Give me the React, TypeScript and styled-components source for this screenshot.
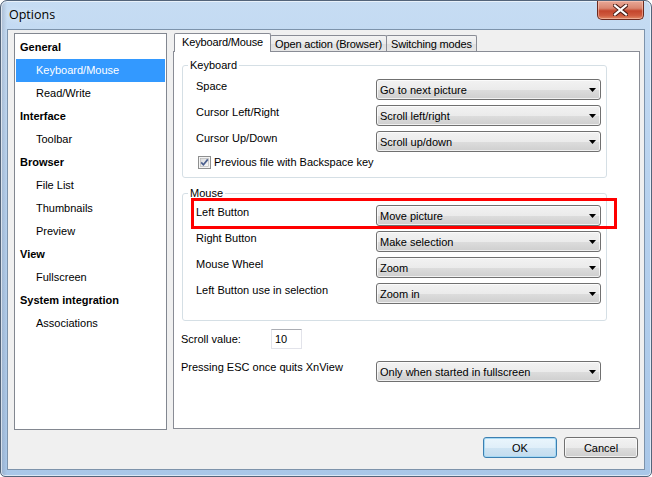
import React from 'react';
import styled, { createGlobalStyle } from 'styled-components';

const GlobalStyle = createGlobalStyle`
  html, body {
    margin: 0;
    padding: 0;
  }
  body {
    font-family: "Liberation Sans", Arial, sans-serif;
    font-size: 11px;
    color: #000;
    background: #fff;
  }
  * {
    box-sizing: border-box;
  }
`;

const treeItems = [
  { label: 'General', head: true },
  { label: 'Keyboard/Mouse', selected: true },
  { label: 'Read/Write' },
  { label: 'Interface', head: true },
  { label: 'Toolbar' },
  { label: 'Browser', head: true },
  { label: 'File List' },
  { label: 'Thumbnails' },
  { label: 'Preview' },
  { label: 'View', head: true },
  { label: 'Fullscreen' },
  { label: 'System integration', head: true },
  { label: 'Associations' },
];

const keyboardRows = [
  { label: 'Space', value: 'Go to next picture' },
  { label: 'Cursor Left/Right', value: 'Scroll left/right' },
  { label: 'Cursor Up/Down', value: 'Scroll up/down' },
];

const mouseRows = [
  { label: 'Left Button', value: 'Move picture', marked: true },
  { label: 'Right Button', value: 'Make selection' },
  { label: 'Mouse Wheel', value: 'Zoom' },
  { label: 'Left Button use in selection', value: 'Zoom in' },
];

const Arrow = () => (
  <svg width="7" height="4" viewBox="0 0 7 4">
    <polygon points="0,0 7,0 3.5,4" fill="#000" />
  </svg>
);

const CheckMark = () => (
  <svg width="13" height="13" viewBox="0 0 13 13">
    <defs>
      <linearGradient id="cbg" x1="0" y1="0" x2="1" y2="1">
        <stop offset="0" stopColor="#d9dadc" />
        <stop offset="1" stopColor="#fafafa" />
      </linearGradient>
    </defs>
    <rect x="0.5" y="0.5" width="12" height="12" fill="#f4f4f4" stroke="#8e8f8f" />
    <rect x="2.5" y="2.5" width="8" height="8" fill="url(#cbg)" stroke="#b1b1b1" strokeWidth="0.6" />
    <path d="M3.2 6.4 L5.4 8.8 L9.8 3.4" fill="none" stroke="#4b5f8e" strokeWidth="1.7" />
  </svg>
);

const CloseGlyph = () => (
  <svg width="15" height="12" viewBox="0 0 15 12">
    <path d="M2 1.5 L13 10.5 M13 1.5 L2 10.5" stroke="#4a1d16" strokeWidth="4.2" strokeLinecap="square" />
    <path d="M2 1.5 L13 10.5 M13 1.5 L2 10.5" stroke="#ffffff" strokeWidth="2.2" strokeLinecap="square" />
  </svg>
);

const App = () => {
  return (
    <>
      <GlobalStyle />
      <Window>
        <TitleBar>
          <Title>Options</Title>
          <CloseButton>
            <CloseGlyph />
          </CloseButton>
        </TitleBar>
        <Client>
          <Main>
            <Tree>
              {treeItems.map((item) => (
                <TreeItem key={item.label} $head={item.head} $selected={item.selected}>
                  {item.label}
                </TreeItem>
              ))}
            </Tree>
            <TabControl>
              <TabStrip>
                <Tab $active>Keyboard/Mouse</Tab>
                <Tab>Open action (Browser)</Tab>
                <Tab>Switching modes</Tab>
              </TabStrip>
              <TabPanel>
                <Group $top={7} $bottom={8}>
                  <Legend>Keyboard</Legend>
                  <Rows>
                    {keyboardRows.map((row) => (
                      <Row key={row.label}>
                        <RowLabel>{row.label}</RowLabel>
                        <Select>
                          <span>{row.value}</span>
                          <Arrow />
                        </Select>
                      </Row>
                    ))}
                    <CheckRow>
                      <CheckMark />
                      <span>Previous file with Backspace key</span>
                    </CheckRow>
                  </Rows>
                </Group>
                <Group $top={5} $bottom={16} $gap={9}>
                  <Legend>Mouse</Legend>
                  <Rows>
                    {mouseRows.map((row) => (
                      <Row key={row.label}>
                        <RowLabel>{row.label}</RowLabel>
                        <Select>
                          <span>{row.value}</span>
                          <Arrow />
                        </Select>
                        {row.marked && <Marker />}
                      </Row>
                    ))}
                  </Rows>
                </Group>
                <ScrollRow>
                  <FieldLabel $width={90}>Scroll value:</FieldLabel>
                  <NumberBox>10</NumberBox>
                </ScrollRow>
                <EscRow>
                  <FieldLabel $width={195}>Pressing ESC once quits XnView</FieldLabel>
                  <Select>
                    <span>Only when started in fullscreen</span>
                    <Arrow />
                  </Select>
                </EscRow>
              </TabPanel>
            </TabControl>
          </Main>
          <Footer>
            <Button $default>OK</Button>
            <Button>Cancel</Button>
          </Footer>
        </Client>
      </Window>
    </>
  );
};

const Window = styled.div`
  width: 652px;
  height: 477px;
  display: flex;
  flex-direction: column;
  padding: 0 6px 6px 6px;
  border: 1px solid #53647a;
  border-radius: 7px 7px 5px 5px;
  background:
    linear-gradient(90deg, rgba(120, 130, 150, 0.35) 0px, rgba(120, 130, 150, 0) 6px),
    linear-gradient(180deg, #c6dcf3 0%, #b6d1ee 45%, #a9c7e8 100%);
  box-shadow: inset 0 0 0 1px rgba(255, 255, 255, 0.6);
  overflow: hidden;
`;

const TitleBar = styled.div`
  height: 28px;
  display: flex;
  justify-content: space-between;
  align-items: flex-start;
`;

const Title = styled.div`
  padding: 6px 0 0 2px;
  font-family: "Open Sans", "Liberation Sans", sans-serif;
  font-size: 12.5px;
  line-height: 16px;
  color: #000;
  text-shadow: 0 0 6px rgba(255, 255, 255, 0.9);
`;

const CloseButton = styled.div`
  width: 47px;
  height: 19px;
  margin-right: 1px;
  display: flex;
  align-items: center;
  justify-content: center;
  border: 1px solid #6b2a1f;
  border-top: none;
  border-radius: 0 0 5px 5px;
  background: linear-gradient(180deg, #e8a897 0%, #d98670 40%, #c4452c 55%, #cf5a3e 80%, #e08a66 100%);
  box-shadow: inset 0 0 0 1px rgba(255, 210, 195, 0.5);
`;

const Client = styled.div`
  flex: 1;
  display: flex;
  flex-direction: column;
  padding: 3px 4px 11px 6px;
  border: 1px solid #7d93ab;
  background: #f0f0f0;
  min-height: 0;
`;

const Main = styled.div`
  flex: 1;
  display: flex;
  gap: 6px;
  min-height: 0;
`;

const Tree = styled.div`
  width: 153px;
  padding: 2px 1px 1px 1px;
  border: 1px solid #828790;
  background: #fff;
`;

const TreeItem = styled.div<{ $head?: boolean; $selected?: boolean }>`
  height: 23px;
  line-height: 23px;
  padding-left: ${({ $head }) => ($head ? '4px' : '20px')};
  font-weight: ${({ $head }) => ($head ? 'bold' : 'normal')};
  background: ${({ $selected }) => ($selected ? '#3399ff' : 'transparent')};
  color: ${({ $selected }) => ($selected ? '#fff' : '#000')};
  white-space: nowrap;
`;

const TabControl = styled.div`
  flex: 1;
  display: flex;
  flex-direction: column;
  margin-bottom: 1px;
`;

const TabStrip = styled.div`
  height: 18px;
  display: flex;
  align-items: flex-end;
  padding-left: 1px;
`;

const Tab = styled.div<{ $active?: boolean }>`
  position: relative;
  z-index: ${({ $active }) => ($active ? 1 : 0)};
  height: ${({ $active }) => ($active ? '19px' : '16px')};
  margin-bottom: ${({ $active }) => ($active ? '-1px' : '0')};
  margin-left: ${({ $active }) => ($active ? '0' : '-1px')};
  padding: ${({ $active }) => ($active ? '0 7px' : '0 4px')};
  line-height: ${({ $active }) => ($active ? '17px' : '16px')};
  border: 1px solid #898c95;
  border-bottom: none;
  border-radius: 2px 2px 0 0;
  background: ${({ $active }) =>
    $active ? '#fff' : 'linear-gradient(180deg, #f3f3f3 0%, #ebebeb 50%, #dedede 51%, #e6e6e6 100%)'};
  white-space: nowrap;
  letter-spacing: -0.15px;
`;

const TabPanel = styled.div`
  flex: 1;
  padding: 7px 0 0 8px;
  border: 1px solid #898c95;
  background: #fff;
`;

const Group = styled.fieldset<{ $top: number; $bottom: number; $gap?: number }>`
  width: 425px;
  margin: ${({ $gap }) => ($gap ? `${$gap}px` : '0')} 0 0 0;
  padding: ${({ $top, $bottom }) => `${$top}px 0 ${$bottom}px 0`};
  border: 1px solid #d5dfe5;
  border-radius: 3px;
  min-inline-size: 0;
`;

const Legend = styled.legend`
  margin-left: 5px;
  padding: 0 2px;
  line-height: 13px;
  font-size: 11px;
`;

const Rows = styled.div`
  display: flex;
  flex-direction: column;
  gap: 5px;
  padding: 0 5px 0 13px;
`;

const Row = styled.div`
  position: relative;
  display: grid;
  grid-template-columns: 180px 225px;
  align-items: start;
`;

const RowLabel = styled.div`
  padding-top: 1px;
  line-height: 13px;
  white-space: nowrap;
`;

const Select = styled.div`
  width: 225px;
  height: 21px;
  display: flex;
  align-items: center;
  justify-content: space-between;
  padding: 0 4px 0 3px;
  border: 1px solid #707070;
  border-radius: 3px;
  background: linear-gradient(180deg, #f2f2f2 0%, #ebebeb 50%, #dddddd 51%, #cfcfcf 100%);
  box-shadow: inset 0 0 0 1px rgba(255, 255, 255, 0.7);
  white-space: nowrap;
`;

const Marker = styled.div`
  position: absolute;
  left: -5px;
  top: -7px;
  width: 426px;
  height: 31px;
  border: 3px solid #ff0000;
  pointer-events: none;
`;

const CheckRow = styled.div`
  display: flex;
  align-items: center;
  gap: 3px;
  height: 14px;
  margin-top: -2px;
  padding-left: 2px;
`;

const ScrollRow = styled.div`
  display: flex;
  align-items: center;
  margin: 8px 0 0 -1px;
`;

const EscRow = styled.div`
  display: flex;
  align-items: flex-start;
  margin: 12px 0 0 -1px;
`;

const FieldLabel = styled.div<{ $width: number }>`
  width: ${({ $width }) => $width}px;
  line-height: 13px;
  white-space: nowrap;
`;

const NumberBox = styled.div`
  width: 31px;
  height: 20px;
  padding-left: 3px;
  line-height: 18px;
  border: 1px solid #e2e3ea;
  border-top-color: #abadb3;
  background: #fff;
`;

const Footer = styled.div`
  display: flex;
  justify-content: flex-end;
  gap: 7px;
  margin-top: 7px;
  padding-right: 2px;
`;

const Button = styled.div<{ $default?: boolean }>`
  width: 74px;
  height: 21px;
  display: flex;
  align-items: center;
  justify-content: center;
  border: 1px solid ${({ $default }) => ($default ? '#3c7fb1' : '#707070')};
  border-radius: 3px;
  background: ${({ $default }) =>
    $default
      ? 'linear-gradient(180deg, #eaf5fc 0%, #e0eff9 50%, #cfe4f3 51%, #c3dcee 100%)'
      : 'linear-gradient(180deg, #f2f2f2 0%, #ebebeb 50%, #dddddd 51%, #cfcfcf 100%)'};
  box-shadow: ${({ $default }) =>
    $default ? 'inset 0 0 0 1px #a6d9f4' : 'inset 0 0 0 1px rgba(255, 255, 255, 0.7)'};
`;

export default App;
